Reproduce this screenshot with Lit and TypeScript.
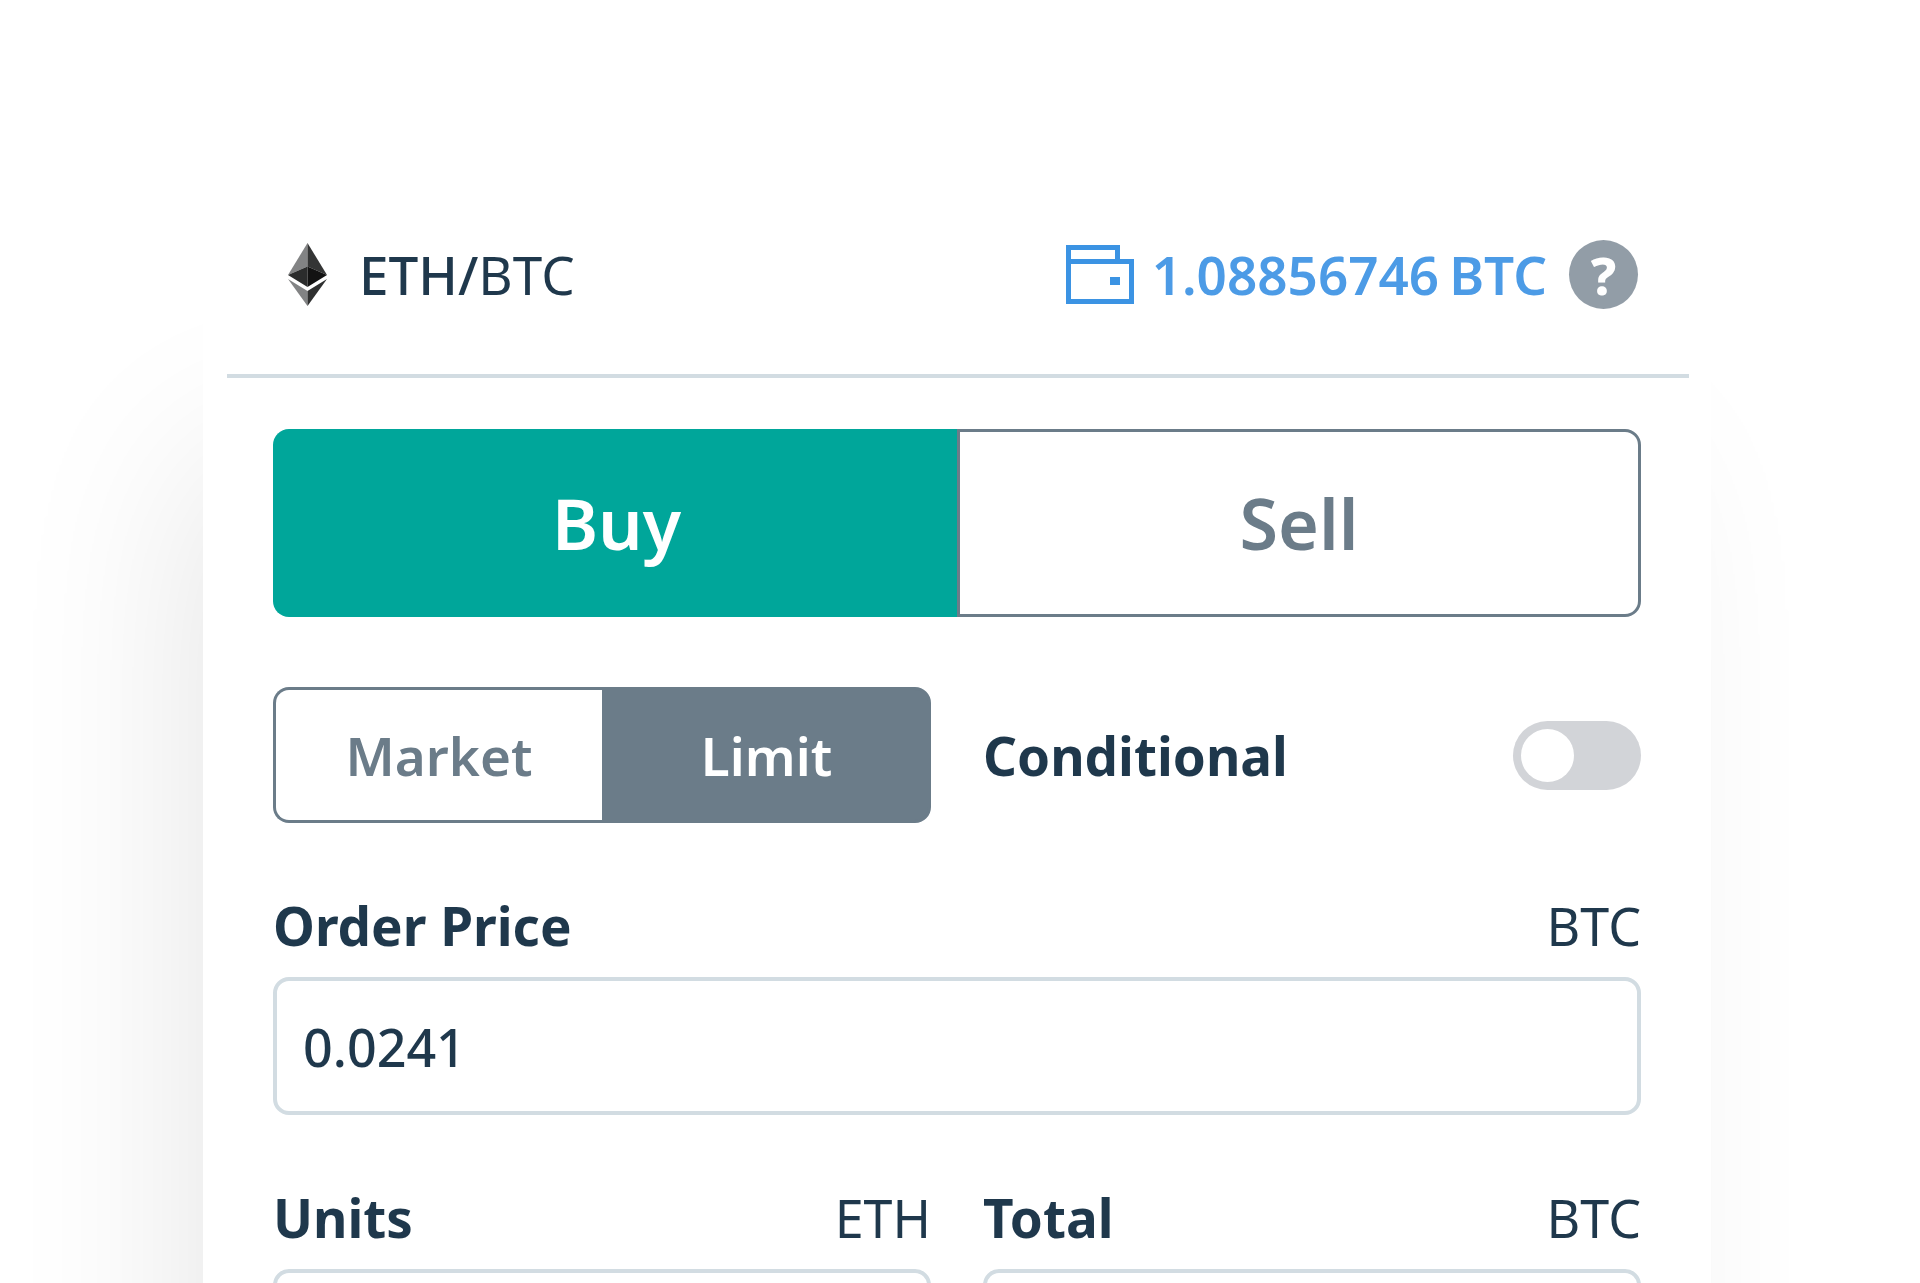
import { LitElement, html, css } from "lit";
import { customElement, property, state } from "lit/decorators.js";
import { classMap } from "lit/directives/class-map.js";

@customElement("amount-field")
class AmountField extends LitElement {
  @property() label = "";
  @property() unit = "";
  @property() value = "";

  static styles = css`
    :host {
      display: block;
      min-width: 0;
    }
    .caption {
      display: flex;
      justify-content: space-between;
      line-height: 66px;
      margin-bottom: 18px;
    }
    .name {
      font-weight: 700;
    }
    .unit {
      font-size: 52px;
    }
    .box {
      box-sizing: border-box;
      display: block;
      width: 100%;
      height: 138px;
      padding: 0 26px;
      border: 4px solid #d2dce2;
      border-radius: 16px;
      background: #fff;
      color: inherit;
      font-family: inherit;
      font-size: 52px;
      font-weight: 500;
      outline: none;
    }
    .box:focus {
      border-color: #4c9be6;
    }
  `;

  render() {
    return html`
      <div class="caption">
        <label class="name" for="amount">${this.label}</label>
        <span class="unit">${this.unit}</span>
      </div>
      <input class="box" id="amount" type="text" inputmode="decimal" .value=${this.value} />
    `;
  }
}

@customElement("app-root")
class AppRoot extends LitElement {
  @state() private side = "Buy";
  @state() private kind = "Limit";

  static styles = css`
    :host {
      display: block;
      box-sizing: border-box;
      height: 100vh;
      overflow: hidden;
      padding: 142px 209px 0 203px;
      background: #fff;
      color: #1f384c;
      font-family: "Noto Sans", "Open Sans", sans-serif;
      font-size: 53px;
    }
    .card {
      border-radius: 64px;
      background: #fff;
      padding-bottom: 70px;
      box-shadow: -46px 280px 190px -40px rgba(0, 0, 0, 0.11);
    }
    .header {
      display: flex;
      align-items: center;
      justify-content: space-between;
      margin: 0 22px 0 24px;
      padding: 98px 51px 65px 61px;
      border-bottom: 4px solid #d2dce2;
      line-height: 67px;
    }
    .pair,
    .wallet {
      display: flex;
      align-items: center;
    }
    .pair {
      gap: 32px;
      font-weight: 400;
    }
    .base {
      font-weight: 500;
    }
    .wallet {
      color: #4c9be6;
      font-weight: 600;
    }
    .purse {
      margin-right: 18px;
    }
    .amount {
      margin-right: 10px;
    }
    .help {
      width: 69px;
      height: 69px;
      margin-left: 22px;
      padding: 0;
      border: 0;
      border-radius: 50%;
      background: #929da7;
      color: #fff;
      font: 800 52px/67px "Noto Sans", "Open Sans", sans-serif;
    }
    .form {
      display: grid;
      grid-template-columns: 1fr 1fr;
      gap: 70px 52px;
      padding: 51px 70px 0;
    }
    .wide {
      grid-column: 1 / -1;
    }
    .segments {
      display: grid;
      grid-template-columns: 1fr 1fr;
    }
    .segment {
      box-sizing: border-box;
      height: 136px;
      padding: 0;
      border: 3px solid #6b7c89;
      background: #fff;
      color: #6b7c89;
      font-family: inherit;
      font-size: 53px;
      font-weight: 600;
    }
    .large {
      height: 188px;
      font-size: 70px;
    }
    .segment:first-child {
      border-right: 0;
      border-radius: 16px 0 0 16px;
    }
    .segment:last-child {
      border-radius: 0 16px 16px 0;
    }
    .active {
      background: #6b7c89;
      color: #fff;
    }
    .large.active {
      background: #00a69a;
      border-color: #00a69a;
    }
    .conditional {
      display: flex;
      align-items: center;
      justify-content: space-between;
      font-weight: 700;
    }
    .switch {
      appearance: none;
      box-sizing: border-box;
      display: flex;
      width: 128px;
      height: 69px;
      margin: 0;
      padding: 8px;
      border-radius: 35px;
      background: #d2d4d8;
    }
    .switch::before {
      content: "";
      width: 53px;
      height: 53px;
      border-radius: 50%;
      background: #fff;
    }
    .switch:checked {
      justify-content: flex-end;
      background: #00a69a;
    }
  `;

  private segment(name: string, current: string, large: boolean, pick: () => void) {
    return html`<button
      type="button"
      class=${classMap({ segment: true, large, active: name === current })}
      aria-pressed=${name === current}
      @click=${pick}
    >${name}</button>`;
  }

  render() {
    return html`
      <main class="card">
        <header class="header">
          <div class="pair">
            <svg width="39" height="63" viewBox="0 0 39 63" aria-hidden="true">
              <path d="M19.5 0 0 32l19.5-8.5z" fill="#828384" />
              <path d="M19.5 0 39 32l-19.5-8.5z" fill="#343535" />
              <path d="M0 32l19.5-8.5V44z" fill="#2b2c2c" />
              <path d="M39 32l-19.5-8.5V44z" fill="#131313" />
              <path d="M0 36l19.5 12v15z" fill="#828384" />
              <path d="M39 36L19.5 48v15z" fill="#2f3030" />
            </svg>
            <span><span class="base">ETH/</span>BTC</span>
          </div>
          <div class="wallet">
            <svg class="purse" width="68" height="60" viewBox="0 0 68 60" fill="none" stroke="#3b93e3" stroke-width="5" aria-hidden="true">
              <path d="M2.5 16.5V2.5H51.5V16.5" />
              <path d="M2.5 16.5H65.5V56.5H2.5z" />
              <path d="M44 36H54" stroke-width="8" />
            </svg>
            <span class="amount">1.08856746</span>
            <span>BTC</span>
            <button class="help" type="button">?</button>
          </div>
        </header>
        <form class="form" @submit=${(e: Event) => e.preventDefault()}>
          <div class="segments wide">
            ${["Buy", "Sell"].map((n) => this.segment(n, this.side, true, () => (this.side = n)))}
          </div>
          <div class="segments">
            ${["Market", "Limit"].map((n) => this.segment(n, this.kind, false, () => (this.kind = n)))}
          </div>
          <div class="conditional">
            <label for="conditional">Conditional</label>
            <input class="switch" id="conditional" type="checkbox" role="switch" />
          </div>
          <amount-field class="wide" label="Order Price" unit="BTC" value="0.0241"></amount-field>
          <amount-field label="Units" unit="ETH"></amount-field>
          <amount-field label="Total" unit="BTC"></amount-field>
        </form>
      </main>
    `;
  }
}
